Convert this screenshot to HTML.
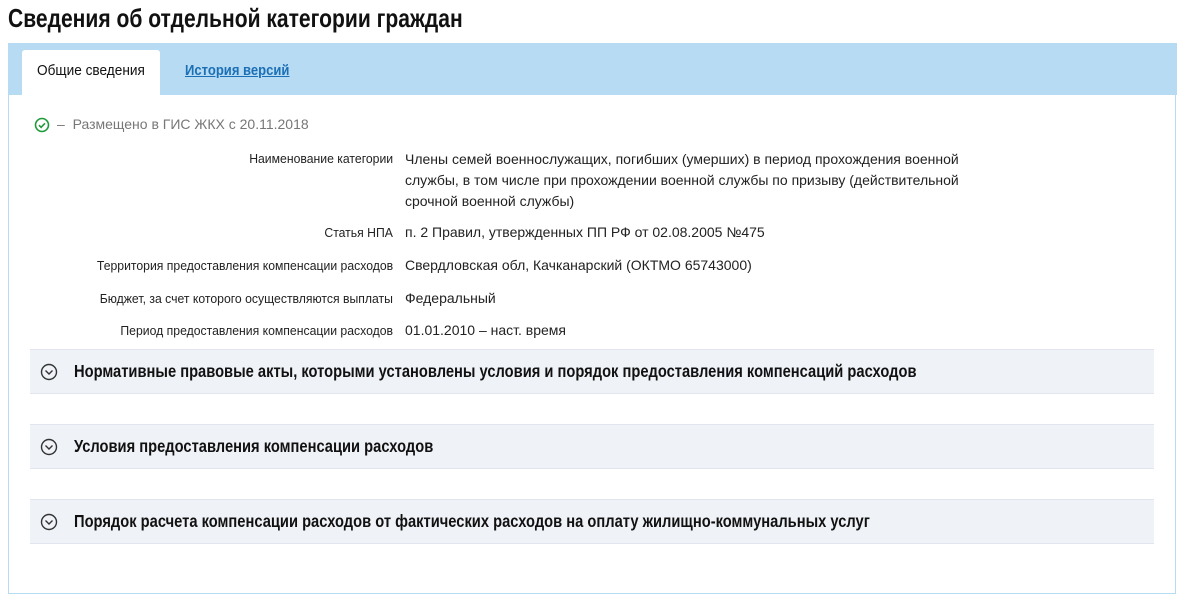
<!DOCTYPE html>
<html><head><meta charset="utf-8"><style>
body{margin:0;width:1180px;height:606px;background:#fff;font-family:"Liberation Sans",sans-serif;position:relative;overflow:hidden;color:#222}
.a{position:absolute;white-space:nowrap}
.c{transform:scaleX(.84);transform-origin:left center}
.r{transform:scaleX(.94);transform-origin:right center;text-align:right}
.band{left:8px;top:43px;width:1169px;height:52px;background:#b8dbf4}
.box{left:8px;top:95px;width:1166px;height:498px;border:1px solid #b8dbf4;border-top:none}
.tab{left:22px;top:50px;width:138px;height:45px;background:#fff;border-radius:3px 3px 0 0}
.lab{right:787px;font-size:13px;color:#222}
.val{left:405px;font-size:14px;color:#222}
.sec{left:30px;width:1124px;height:43px;background:#eff2f7;border:1px solid #e1e6ee;border-left:none;border-right:none}
.sec svg{position:absolute;left:10px;top:13px}
.sec span{position:absolute;left:44px;top:11px;font-size:17.5px;font-weight:bold;color:#111;transform:scaleX(.84);transform-origin:left center;white-space:nowrap}
</style></head><body>
<div class="a" style="left:8px;top:3px;font-size:26px;font-weight:bold;color:#111;transform:scaleX(.81);transform-origin:left center">Сведения об отдельной категории граждан</div>
<div class="a band"></div>
<div class="a box"></div>
<div class="a tab"></div>
<div class="a" style="left:37px;top:63px;font-size:14.5px;color:#111;transform:scaleX(.94);transform-origin:left center">Общие сведения</div>
<div class="a" style="left:185px;top:63px;font-size:14.5px;font-weight:bold;color:#1a6fb5;text-decoration:underline;transform:scaleX(.9);transform-origin:left center">История версий</div>
<svg class="a" style="left:34px;top:117px" width="16" height="16" viewBox="0 0 16 16"><circle cx="8" cy="8" r="6.5" fill="none" stroke="#1f9a3a" stroke-width="1.6"/><path d="M5 8.2l2.1 2.1L11 6.3" fill="none" stroke="#1f9a3a" stroke-width="1.6"/></svg>
<div class="a" style="left:57px;top:116px;font-size:14px;color:#777">–&nbsp; Размещено в ГИС ЖКХ с 20.11.2018</div>
<div class="a lab r" style="top:151px">Наименование категории</div>
<div class="a val" style="top:149px;line-height:21px;white-space:normal;width:575px">Члены семей военнослужащих, погибших (умерших) в период прохождения военной службы, в том числе при прохождении военной службы по призыву (действительной срочной военной службы)</div>
<div class="a lab r" style="top:225px">Статья НПА</div>
<div class="a val" style="top:224px">п. 2 Правил, утвержденных ПП РФ от 02.08.2005 №475</div>
<div class="a lab r" style="top:258px">Территория предоставления компенсации расходов</div>
<div class="a val" style="top:257px">Свердловская обл, Качканарский (ОКТМО 65743000)</div>
<div class="a lab r" style="top:291px">Бюджет, за счет которого осуществляются выплаты</div>
<div class="a val" style="top:290px">Федеральный</div>
<div class="a lab r" style="top:323px">Период предоставления компенсации расходов</div>
<div class="a val" style="top:322px">01.01.2010 – наст. время</div>
<div class="a sec" style="top:349px"><svg width="18" height="18" viewBox="0 0 18 18"><circle cx="9" cy="9" r="7.5" fill="none" stroke="#333" stroke-width="1.4"/><path d="M5.5 7.5L9 11l3.5-3.5" fill="none" stroke="#333" stroke-width="1.4"/></svg><span>Нормативные правовые акты, которыми установлены условия и порядок предоставления компенсаций расходов</span></div>
<div class="a sec" style="top:424px"><svg width="18" height="18" viewBox="0 0 18 18"><circle cx="9" cy="9" r="7.5" fill="none" stroke="#333" stroke-width="1.4"/><path d="M5.5 7.5L9 11l3.5-3.5" fill="none" stroke="#333" stroke-width="1.4"/></svg><span>Условия предоставления компенсации расходов</span></div>
<div class="a sec" style="top:499px"><svg width="18" height="18" viewBox="0 0 18 18"><circle cx="9" cy="9" r="7.5" fill="none" stroke="#333" stroke-width="1.4"/><path d="M5.5 7.5L9 11l3.5-3.5" fill="none" stroke="#333" stroke-width="1.4"/></svg><span>Порядок расчета компенсации расходов от фактических расходов на оплату жилищно-коммунальных услуг</span></div>
</body></html>
